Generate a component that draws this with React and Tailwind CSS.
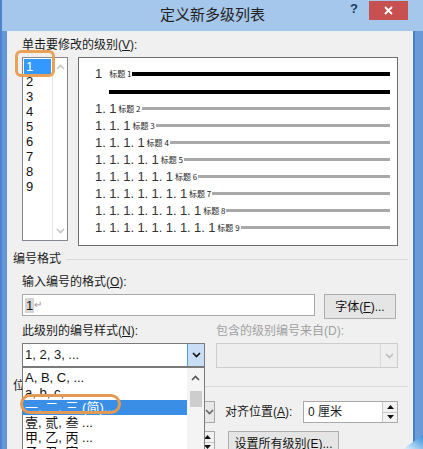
import React from "react";

const Chevron = ({ up, className }) => (
    <svg width="9" height="6" viewBox="0 0 9 6" className={className}>
        <polyline
            points={up ? "1,5 4.5,1.5 8,5" : "1,1 4.5,4.5 8,1"}
            fill="none"
            stroke="currentColor"
            strokeWidth="1.6"
        />
    </svg>
);

const Spin = () => (
    <div className="w-[15px] h-full border-l border-[#c8c8c8] flex flex-col">
        <div className="flex-1 flex items-center justify-center border-b border-[#c8c8c8] bg-[#f2f2f2]">
            <svg width="7" height="4" viewBox="0 0 7 4"><polygon points="0,4 3.5,0 7,4" fill="#111" /></svg>
        </div>
        <div className="flex-1 flex items-center justify-center bg-[#f2f2f2]">
            <svg width="7" height="4" viewBox="0 0 7 4"><polygon points="0,0 3.5,4 7,0" fill="#111" /></svg>
        </div>
    </div>
);

const levels = [2, 3, 4, 5, 6, 7, 8, 9];

const PreviewBox = () => {
    return (
        <div className="w-[320px] h-[189px] border border-[#6d6d6d] bg-white pt-[6px] pl-[16px] pr-[7px] font-['Liberation_Sans',sans-serif]">
            <div className="h-[19px] flex items-center">
                <span className="text-[13px] text-[#333] leading-none">1</span>
                <span className="ml-[7px] text-[8px] text-[#222] leading-none font-['Noto_Sans_CJK_SC',sans-serif]">标题 1</span>
                <div className="ml-[1px] flex-1 h-[4px] bg-black"></div>
            </div>
            <div className="h-[17px] flex items-center">
                <div className="ml-[14px] flex-1 h-[4px] bg-black"></div>
            </div>
            {levels.map((n) => (
                <div key={n} className="h-[17px] flex items-center">
                    <span className="text-[13px] text-[#333] leading-none whitespace-pre tracking-[-0.1px]">
                        {Array(n).fill("1").join(". ")}
                    </span>
                    <span className="ml-[2px] text-[8px] text-[#222] leading-none whitespace-pre font-['Noto_Sans_CJK_SC',sans-serif]">
                        标题 {n}
                    </span>
                    <div className="ml-[1px] flex-1 h-[3px] bg-[#a9a9a9]"></div>
                </div>
            ))}
        </div>
    );
};

const LevelList = () => {
    return (
        <div className="w-[46px] h-[184px] border border-[#828790] bg-white flex">
            <div className="w-[29px] px-px pt-px">
                {[1, 2, 3, 4, 5, 6, 7, 8, 9].map((n) => (
                    <div
                        key={n}
                        className={`h-[15px] leading-[15px] text-[13px] pl-[2px] ${
                            n === 1 ? "bg-[#3399ff] text-white" : "text-[#111]"
                        }`}
                    >
                        {n}
                    </div>
                ))}
            </div>
            <div className="flex-1 border-l border-[#e6e6e6] flex flex-col items-center justify-between pt-[6px] pb-[6px] text-[#c4c4c4]">
                <Chevron up />
                <Chevron />
            </div>
        </div>
    );
};

const Button = ({ title, className }) => (
    <div
        className={`h-[25px] border border-[#adadad] bg-[#e5e5e5] flex items-center justify-center text-[12px] text-[#111] ${className}`}
    >
        {title}
    </div>
);

const DropList = () => {
    const items = ["A, B, C, ...", "a, b, c, ...", "一, 二, 三 (简)...", "壹, 贰, 叁 ...", "甲, 乙, 丙 ...", "子, 丑, 寅 ..."];
    return (
        <div className="absolute left-[22px] top-[367px] w-[183px] h-[95px] border border-[#7a7a7a] bg-white flex">
            <div className="flex-1 pt-[2px]">
                {items.map((t, i) => (
                    <div
                        key={t}
                        className={`h-[15px] leading-[15px] text-[13px] pl-[2px] whitespace-pre ${
                            i === 2 ? "bg-[#3a8ee6] text-white" : "text-[#111]"
                        }`}
                    >
                        {t}
                    </div>
                ))}
            </div>
            <div className="w-[17px] bg-[#f4f4f4] flex flex-col items-center pt-[7px] text-[#555]">
                <Chevron up />
                <div className="mt-[10px] w-[12px] h-[16px] bg-[#cdcdcd]"></div>
            </div>
        </div>
    );
};

export default function App() {
    return (
        <div className="relative w-[423px] h-[449px] overflow-hidden bg-[#6b9cdc] flex flex-col font-['Liberation_Sans','Noto_Sans_CJK_SC',sans-serif]">
            {/* title bar */}
            <div className="h-[31px] shrink-0 bg-[#a6c7ec] border-l-[2px] border-[#4f82cc] grid grid-cols-[1fr_auto_1fr]">
                <div></div>
                <div className="pt-[5px] text-[15px] leading-[18px] text-[#222] font-['Noto_Sans_CJK_SC',sans-serif]">
                    定义新多级列表
                </div>
                <div className="flex justify-end items-start pr-[15px]">
                    <span className="mt-[2px] mr-[11px] text-[13px] font-bold leading-[14px] text-[#1d3b63]">?</span>
                    <div className="mt-px w-[39px] h-[19px] bg-[#c75050] flex items-center justify-center">
                        <svg width="9" height="9" viewBox="0 0 9 9">
                            <path d="M1 1 L8 8 M8 1 L1 8" stroke="#fff" strokeWidth="1.8" />
                        </svg>
                    </div>
                </div>
            </div>

            {/* body */}
            <div className="flex-1 flex">
                <div className="w-[7px] shrink-0 bg-[#6297da] border-l-[2px] border-[#4f82cc]"></div>
                <div className="w-[406px] bg-[#f0f0f0] pt-[6px] pl-[15px] pr-[15px] text-[12px] text-[#1a1a1a]">
                    <div className="h-[17px] leading-[17px]">
                        单击要修改的级别(<span className="underline">V</span>):
                    </div>
                    <div className="mt-[3px] flex items-start gap-[10px]">
                        <LevelList />
                        <PreviewBox />
                    </div>

                    <div className="mt-[5px] -ml-[9px] -mr-[10px] h-[17px] flex items-center">
                        <span className="leading-[17px]">编号格式</span>
                        <div className="ml-[5px] flex-1 h-px bg-[#dadada]"></div>
                    </div>
                    <div className="mt-[6px] h-[17px] leading-[17px]">
                        输入编号的格式(<span className="underline">O</span>):
                    </div>
                    <div className="mt-[3px] flex items-start">
                        <div className="w-[293px] h-[22px] border border-[#a8a8a8] bg-white flex items-center pl-[2px]">
                            <span className="bg-[#d6d6d6] text-[13px] leading-[15px] px-px">1</span>
                            <span className="text-[10px] text-[#999] leading-none">↵</span>
                        </div>
                        <Button title={<span>字体(<span className="underline">F</span>)...</span>} className="ml-[9px] w-[72px]" />
                    </div>

                    <div className="mt-[4px] h-[17px] flex leading-[17px]">
                        <div className="w-[194px]">
                            此级别的编号样式(<span className="underline">N</span>):
                        </div>
                        <div className="text-[#a0a0a0]">包含的级别编号来自(D):</div>
                    </div>
                    <div className="mt-[3px] flex items-start">
                        <div className="w-[183px] h-[24px] border border-[#7a7a7a] bg-white flex">
                            <div className="flex-1 pl-[2px] text-[13px] leading-[22px]">1, 2, 3, ...</div>
                            <div className="w-[17px] bg-[#c7def5] border-l border-[#569de5] flex items-center justify-center text-[#111]">
                                <Chevron />
                            </div>
                        </div>
                        <div className="ml-[11px] w-[182px] h-[25px] border border-[#cccccc] bg-[#eeeeee] flex justify-end">
                            <div className="w-[17px] border-l border-[#d8d8d8] flex items-center justify-center text-[#bdbdbd]">
                                <Chevron />
                            </div>
                        </div>
                    </div>

                    <div className="mt-[10px] -ml-[9px] -mr-[10px] h-[17px] flex items-center">
                        <span className="leading-[17px]">位置</span>
                        <div className="ml-[5px] flex-1 h-px bg-[#dadada]"></div>
                    </div>
                    <div className="mt-[6px] flex items-center">
                        <div className="w-[193px] h-[22px] border border-[#a8a8a8] bg-[#e8e8e8] flex justify-end">
                            <div className="w-[10px] flex items-center justify-center text-[#666]">
                                <Chevron />
                            </div>
                        </div>
                        <span className="ml-[10px] w-[78px]">
                            对齐位置(<span className="underline">A</span>):
                        </span>
                        <div className="w-[95px] h-[22px] border border-[#a8a8a8] bg-white flex items-stretch">
                            <div className="flex-1 pl-[4px] text-[12px] leading-[20px]">0 厘米</div>
                            <Spin />
                        </div>
                    </div>
                    <div className="mt-[8px] flex items-start">
                        <div className="w-[193px] h-[22px] border border-[#a8a8a8] bg-white flex justify-end">
                            <Spin />
                        </div>
                        <Button
                            title={<span>设置所有级别(<span className="underline">E</span>)...</span>}
                            className="ml-[13px] w-[111px]"
                        />
                    </div>
                </div>
                <div className="w-[10px] shrink-0 bg-[#6a9ad8] border-l-[2px] border-[#4b7fc5]"></div>
            </div>

            {/* open dropdown list */}
            <DropList />

            {/* highlight outlines */}
            <div className="absolute left-[15px] top-[50px] w-[40px] h-[27px] border-[3px] border-[#e9a15a] rounded-[6px]"></div>
            <div className="absolute left-[20px] top-[394px] w-[101px] h-[20px] border-[3px] border-[#e39a55] rounded-full"></div>

            {/* corner swoosh */}
            <svg className="absolute right-0 bottom-0" width="20" height="16" viewBox="0 0 20 16">
                <defs>
                    <linearGradient id="sw" x1="0" y1="1" x2="1" y2="0">
                        <stop offset="0" stopColor="#e8f4fc" />
                        <stop offset="1" stopColor="#2f8fdc" />
                    </linearGradient>
                </defs>
                <polygon points="0,16 20,2 20,16" fill="url(#sw)" />
            </svg>
        </div>
    );
}
